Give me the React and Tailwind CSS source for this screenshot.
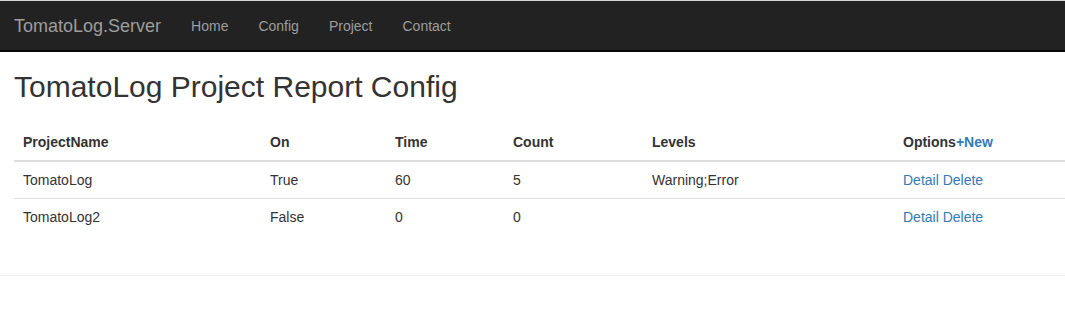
const cols = [
  { key: 'name', label: 'ProjectName', w: 'w-[247px]' },
  { key: 'on', label: 'On', w: 'w-[125px]' },
  { key: 'time', label: 'Time', w: 'w-[118px]' },
  { key: 'count', label: 'Count', w: 'w-[139px]' },
  { key: 'levels', label: 'Levels', w: 'w-[251px]' },
];

const rows = [
  { name: 'TomatoLog', on: 'True', time: '60', count: '5', levels: 'Warning;Error' },
  { name: 'TomatoLog2', on: 'False', time: '0', count: '0', levels: '' },
];

const navLinks = ['Home', 'Config', 'Project', 'Contact'];

export default function App() {
  return (
    <div className="min-h-[317px] bg-white text-[14px] leading-[20px] text-[#333]" style={{ fontFamily: '"Liberation Sans", Arial, sans-serif' }}>
      <nav className="flex h-[52px] items-start border-t border-t-[#d4d4d4] border-b-2 border-b-[#080808] bg-[#222]">
        <a className="pl-[14px] pr-[15px] py-[15px] text-[18px] leading-[20px] text-[#9d9d9d]">TomatoLog.Server</a>
        <ul className="flex">
          {navLinks.map(l => (
            <li key={l}>
              <a className="block px-[15px] py-[15px] leading-[20px] text-[#9d9d9d]">{l}</a>
            </li>
          ))}
        </ul>
      </nav>

      <div className="pl-[14px]">
        <h2 className="mt-[18px] mb-[21px] text-[30px] leading-[33px] font-normal text-[#333]">TomatoLog Project Report Config</h2>

        <table className="w-[1051px] border-collapse">
          <thead>
            <tr>
              {cols.map(c => (
                <th key={c.key} className={`${c.w} p-[8px] pl-[9px] text-left font-bold border-b-2 border-[#ddd]`}>{c.label}</th>
              ))}
              <th className="p-[8px] pl-[9px] text-left font-bold border-b-2 border-[#ddd]">
                Options<a className="text-[#337ab7]">+New</a>
              </th>
            </tr>
          </thead>
          <tbody>
            {rows.map((r, i) => (
              <tr key={r.name}>
                {cols.map(c => (
                  <td key={c.key} className={`p-[8px] pl-[9px] ${i > 0 ? 'border-t border-[#ddd]' : ''}`}>{r[c.key]}</td>
                ))}
                <td className={`p-[8px] pl-[9px] ${i > 0 ? 'border-t border-[#ddd]' : ''}`}>
                  <a className="text-[#337ab7]">Detail</a> <a className="text-[#337ab7]">Delete</a>
                </td>
              </tr>
            ))}
          </tbody>
        </table>
      </div>

      <hr className="mt-[40px] border-t border-[#eee]" />
    </div>
  );
}
